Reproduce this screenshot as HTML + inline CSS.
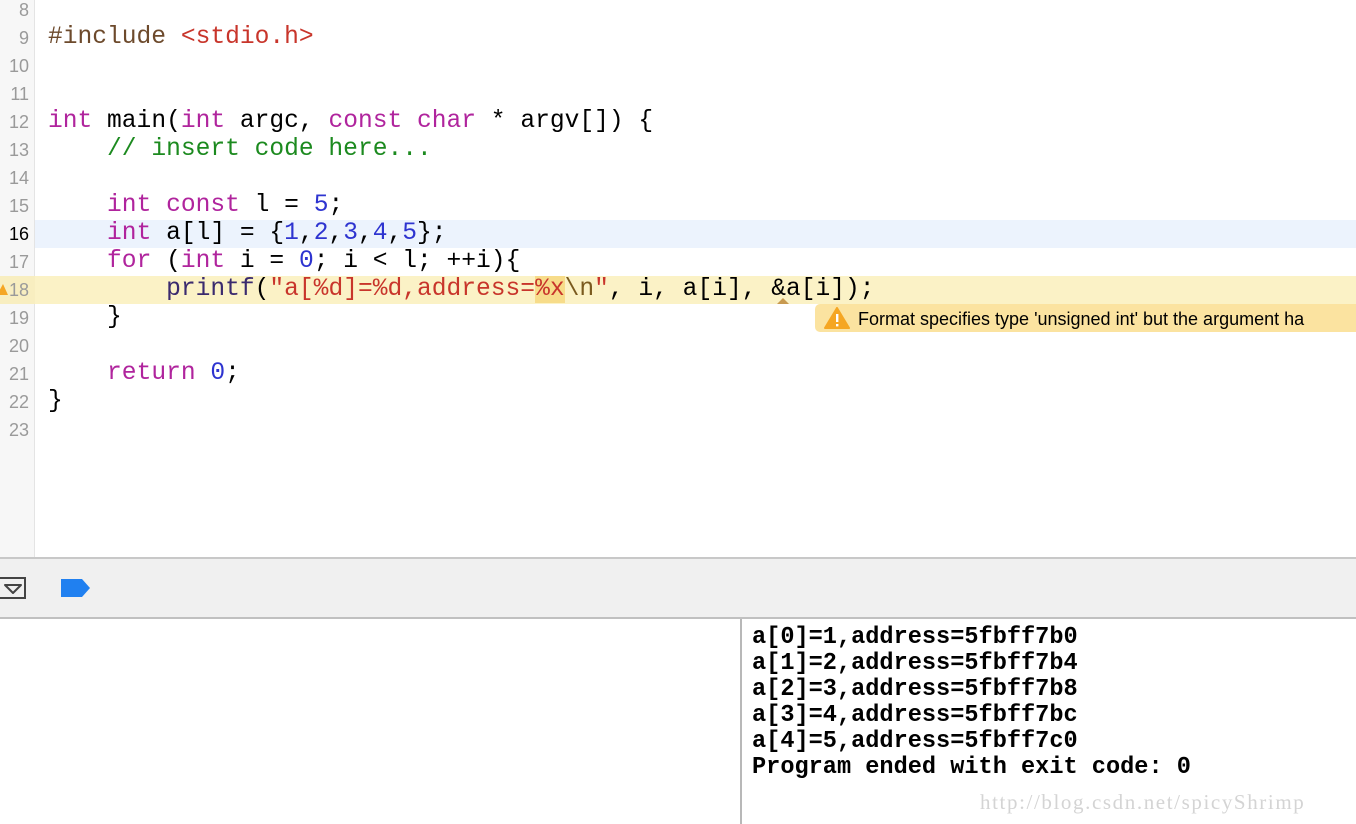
<!DOCTYPE html>
<html><head><style>
body{margin:0;width:1356px;height:824px;overflow:hidden;background:#fff;position:relative;font-family:"Liberation Mono",monospace}
.gut{position:absolute;left:0;top:0;width:34px;height:557px;background:#f7f7f7;border-right:1px solid #e4e4e4}
.hl{position:absolute;left:0;width:1356px;height:28px}
.ln{position:absolute;left:0;width:29px;text-align:right;font-family:"Liberation Sans",sans-serif;font-size:18px;color:#9a9a9a;line-height:28px}
.code{position:absolute;left:48px;font-size:24.6px;line-height:28px;white-space:pre;color:#000}
.k{color:#b0249d}.s{color:#c8352b}.c{color:#1c8a1f}.n{color:#2e34d0}.p{color:#6d4a2c}.f{color:#3a2a6e}.e{color:#7a5a1e}
.con{position:absolute;left:752px;top:625px;font-size:23.6px;font-weight:bold;line-height:26px;white-space:pre}
</style></head><body>
<div class="hl" style="top:220px;background:#ecf3fd"></div>
<div class="hl" style="top:276px;background:#fbf2c6"></div>
<div class="gut"></div>
<div class="hl" style="top:276px;width:35px;background:#f8eec0"></div>
<svg style="position:absolute;left:0;top:282px" width="8" height="14"><path d="M-3 13 L3 2 L8 13Z" fill="#f5a623"/></svg>
<div class="ln" style="top:-4px">8<br>9<br>10<br>11<br>12<br>13<br>14<br>15<br><b style="color:#000;font-weight:normal">16</b><br>17<br>18<br>19<br>20<br>21<br>22<br>23</div>
<div class="code" style="top:-4px">
<span class="p">#include</span> <span class="s">&lt;stdio.h&gt;</span>


<span class="k">int</span> main(<span class="k">int</span> argc, <span class="k">const</span> <span class="k">char</span> * argv[]) {
    <span class="c">// insert code here...</span>

    <span class="k">int</span> <span class="k">const</span> l = <span class="n">5</span>;
    <span class="k">int</span> a[l] = {<span class="n">1</span>,<span class="n">2</span>,<span class="n">3</span>,<span class="n">4</span>,<span class="n">5</span>};
    <span class="k">for</span> (<span class="k">int</span> i = <span class="n">0</span>; i &lt; l; ++i){
        <span class="f">printf</span>(<span class="s">"a[%d]=%d,address=<span style="background:#f7dc8a">%x</span></span><span class="e">\n</span><span class="s">"</span>, i, a[i], &amp;a[i]);
    }

    <span class="k">return</span> <span class="n">0</span>;
}
</div>
<svg style="position:absolute;left:776px;top:298px" width="14" height="7"><path d="M1 6 L7 0 L13 6Z" fill="#c89a50"/></svg>
<div style="position:absolute;left:815px;top:304px;width:560px;height:28px;background:#fbe3a0;border-radius:5px 0 0 5px"></div>
<svg style="position:absolute;left:824px;top:307px" width="26" height="22"><path d="M13 1 L25 21 L1 21Z" fill="#f5a623" stroke="#f5a623" stroke-linejoin="round" stroke-width="2"/><rect x="12" y="7" width="2.4" height="8" fill="#fff"/><rect x="12" y="17" width="2.4" height="2.4" fill="#fff"/></svg>
<div style="position:absolute;left:858px;top:307px;font-family:'Liberation Sans',sans-serif;font-size:18px;line-height:24px;white-space:nowrap;color:#000">Format specifies type 'unsigned int' but the argument ha</div>
<div style="position:absolute;left:0;top:557px;width:1356px;height:58px;background:#f0f0f0;border-top:2px solid #c8c8c8;border-bottom:2px solid #c0c0c0"></div>
<div style="position:absolute;left:-2px;top:577px;width:28px;height:22px;border:2px solid #444;box-sizing:border-box"></div>
<svg style="position:absolute;left:3px;top:583px" width="20" height="12"><path d="M2 2 H18 L10 10Z" fill="none" stroke="#444" stroke-width="2" stroke-linejoin="round"/></svg>
<svg style="position:absolute;left:60px;top:578px" width="32" height="20"><path d="M1 1 H22 L30 10 L22 19 H1Z" fill="#2080f0"/></svg>
<div style="position:absolute;left:740px;top:619px;width:2px;height:205px;background:#b8b8b8"></div>
<div class="con">a[0]=1,address=5fbff7b0
a[1]=2,address=5fbff7b4
a[2]=3,address=5fbff7b8
a[3]=4,address=5fbff7bc
a[4]=5,address=5fbff7c0
Program ended with exit code: 0</div>
<div style="position:absolute;left:980px;top:790px;font-family:'Liberation Serif',serif;font-size:21px;letter-spacing:1.6px;color:#d4d4d4;white-space:nowrap">http://blog.csdn.net/spicyShrimp</div>
</body></html>
